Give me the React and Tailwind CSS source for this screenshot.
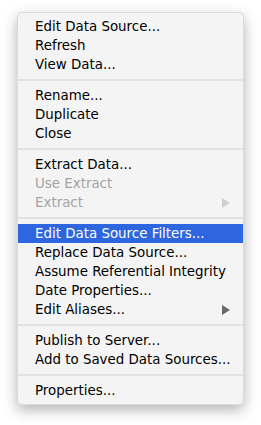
const groups = [
  [{ label: "Edit Data Source..." }, { label: "Refresh" }, { label: "View Data..." }],
  [{ label: "Rename..." }, { label: "Duplicate" }, { label: "Close" }],
  [
    { label: "Extract Data..." },
    { label: "Use Extract", disabled: true },
    { label: "Extract", disabled: true, submenu: true },
  ],
  [
    { label: "Edit Data Source Filters...", active: true },
    { label: "Replace Data Source..." },
    { label: "Assume Referential Integrity" },
    { label: "Date Properties..." },
    { label: "Edit Aliases...", submenu: true },
  ],
  [{ label: "Publish to Server..." }, { label: "Add to Saved Data Sources..." }],
  [{ label: "Properties..." }],
];

function Arrow({ color }) {
  return (
    <svg width="8" height="10" viewBox="0 0 8 10" className="shrink-0">
      <path d="M0 0 L8 5 L0 10 Z" fill={color} />
    </svg>
  );
}

function Item({ item }) {
  const text = item.active ? "text-white" : item.disabled ? "text-[#a3a3a3]" : "text-black";
  return (
    <div
      className={`h-[19px] flex items-center justify-between pl-[17px] pr-[13px] ${text} ${
        item.active ? "bg-[#2d66de]" : ""
      }`}
    >
      <span className="whitespace-nowrap leading-none">{item.label}</span>
      {item.submenu && <Arrow color={item.disabled ? "#cfcfcf" : "#6a6a6a"} />}
    </div>
  );
}

export default function App() {
  return (
    <div className="w-[261px] h-[425px] bg-white pt-[12px] pl-[17px]">
      <div
        className="w-[227px] bg-[#f4f4f4] rounded-[5px] py-[4px] border border-black/10 shadow-[0_5px_14px_rgba(0,0,0,0.3)] text-[13.4px]"
        style={{ fontFamily: '"DejaVu Sans", "Liberation Sans", sans-serif' }}
      >
        {groups.map((group, gi) => (
          <div key={gi}>
            {gi > 0 && (
              <div className="h-[12px] flex items-center">
                <div className="w-full h-[2px] bg-[#e2e2e2]" />
              </div>
            )}
            {group.map((item) => (
              <Item key={item.label} item={item} />
            ))}
          </div>
        ))}
      </div>
    </div>
  );
}
